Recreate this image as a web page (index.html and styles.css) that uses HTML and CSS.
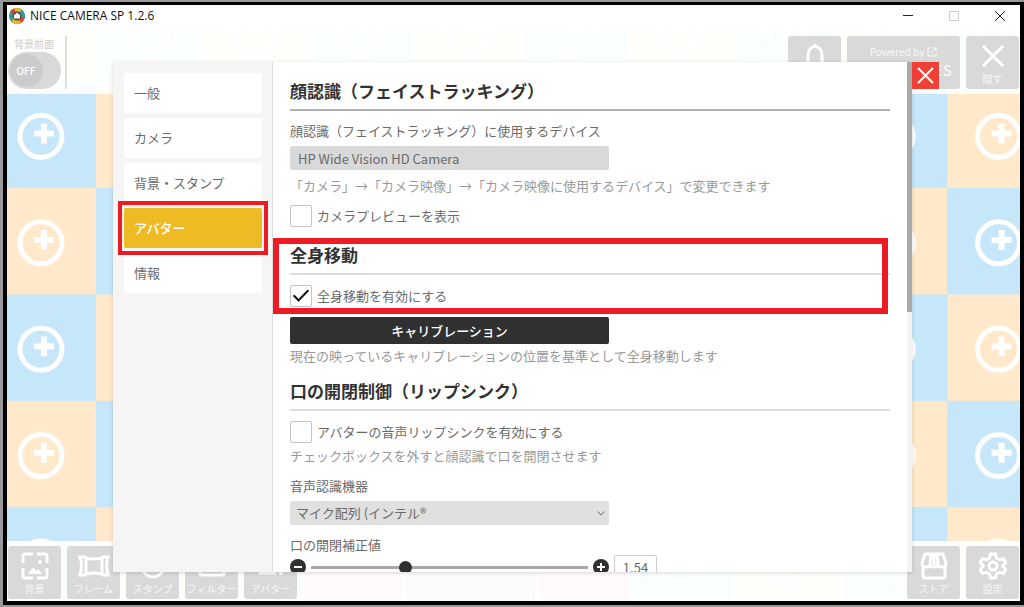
FILE: index.html
```html
<!DOCTYPE html>
<html lang="ja">
<head>
    <meta charset="UTF-8">
    <meta name="viewport" content="width=device-width, initial-scale=1.0">
    <title>NICE CAMERA SP 1.2.6</title>
    <link rel="stylesheet" href="styles.css">
</head>
<body>
    <div class="window">
        <header class="titlebar">
            <svg class="app-icon" viewBox="0 0 16 16">
                <circle cx="8" cy="8" r="8" fill="#2b9c93"/>
                <path d="M8 8L1 4A8 8 0 0 1 6 .3L12 4z" fill="#d8432f"/>
                <path d="M8 8L5 .6A8 8 0 0 1 13.500 2.200L12 8z" fill="#e8b32c"/>
                <path d="M8 8L12 2A8 8 0 0 1 15.500 11L11 11z" fill="#2aa198"/>
                <path d="M8 8L15.500 9A8 8 0 0 1 10 15.700L5 13z" fill="#d8432f"/>
                <path d="M8 8L12 15A8 8 0 0 1 3 14.200L4 9z" fill="#e8b32c"/>
                <circle cx="8" cy="8" r="4.500" fill="#5d4a44"/>
                <path d="M5 6.500h1.500L7.200 5h1.800l.7 1.500H11v4H5z" fill="#fff"/>
            </svg>
            <h1 class="titlebar-text">NICE CAMERA SP 1.2.6</h1>
            <div class="titlebar-controls">
                <button class="win-btn" aria-label="最小化">
                    <svg viewBox="0 0 10 10"><path d="M0 4.500h10" stroke="#222"/></svg>
                </button>
                <button class="win-btn" aria-label="最大化">
                    <svg viewBox="0 0 10 10"><path d="M.5.5h9v9h-9z" stroke="#ccc"/></svg>
                </button>
                <button class="win-btn" aria-label="閉じる">
                    <svg viewBox="0 0 10 10"><path d="M0 0l10 10M10 0L0 10" stroke="#222"/></svg>
                </button>
            </div>
        </header>

        <main class="stage">
            <svg class="board" width="100%" height="100%">
                <defs>
                    <g id="add">
                        <circle cx="51.400" cy="54.800" r="21" fill="none" stroke="#fff" stroke-width="5"/>
                        <path d="M54.400 42v20M44.400 52h20" stroke="#fff" stroke-width="6"/>
                    </g>
                    <pattern id="checker" x="89" y="158" width="212.800" height="212.800" patternUnits="userSpaceOnUse">
                        <rect width="212.800" height="212.800" fill="#ffe9ca"/>
                        <rect width="106.400" height="106.400" fill="#c6e6fa"/>
                        <rect x="106.400" y="106.400" width="106.400" height="106.400" fill="#c6e6fa"/>
                        <use href="#add"/>
                        <use href="#add" x="106.400"/>
                        <use href="#add" y="106.400"/>
                        <use href="#add" x="106.400" y="106.400"/>
                    </pattern>
                </defs>
                <rect width="100%" height="100%" fill="url(#checker)"/>
                <!-- photo frame behind the dialog -->
                <rect x="297" y="500" width="326" height="80" fill="#f7c3ca"/>
                <rect x="400" y="500" width="130" height="80" fill="#ccc"/>
                <path d="M395 500l3 80M530 500v80" stroke="#fff" stroke-width="4"/>
            </svg>

            <div class="toolbar toolbar-top">
                <div class="front-switch">
                    <span id="front-label" class="front-label">背景前面</span>
                    <button class="toggle" role="switch" aria-checked="false" aria-labelledby="front-label">
                        <span class="toggle-knob">OFF</span>
                    </button>
                </div>
                <div class="toolbar-group">
                    <button class="tool" aria-label="お知らせ">
                        <svg class="tool-icon" viewBox="0 0 28 28"><path d="M4 24h20M7 23v-10a7 8.500 0 0 1 14 0v10M14 5v-3"/></svg>
                    </button>
                    <button class="tool tool-powered">
                        <span class="powered-by">Powered by
                            <svg class="link-icon" viewBox="0 0 10 10"><path d="M4 1H1v8h8V6M6 1h3v3M9 1L4 6"/></svg>
                        </span>
                        <span class="powered-name">TEXTURES</span>
                    </button>
                    <button class="tool">
                        <svg class="tool-icon" viewBox="0 0 28 28"><path d="M4 4l20 20M24 4L4 24"/></svg>
                        隠す
                    </button>
                </div>
            </div>

            <div class="toolbar toolbar-bottom">
                <div class="toolbar-group">
                    <button class="tool">
                        <svg class="tool-icon" viewBox="0 0 28 28">
                            <path d="M2 11V4q0-2 2-2h8M16 2h8q2 0 2 2v7M26 16v8q0 2-2 2h-8M12 26H4q-2 0-2-2v-8"/>
                            <path class="solid" d="M7 22l5-7 3 4 2-2 4 5z"/>
                            <circle class="solid" cx="19" cy="10" r="2"/>
                        </svg>
                        背景
                    </button>
                    <button class="tool">
                        <svg class="tool-icon tool-icon-wide" viewBox="0 0 34 28">
                            <path d="M9 6q8 2 16 0v16q-8-2-16 0zM9 5H3q3 8 0 18h6M25 5h6q-3 8 0 18h-6"/>
                        </svg>
                        フレーム
                    </button>
                    <button class="tool">
                        <svg class="tool-icon" viewBox="0 0 28 28"><circle cx="14" cy="14" r="11"/><path d="M9 16q5 5 10 0"/></svg>
                        スタンプ
                    </button>
                    <button class="tool">
                        <svg class="tool-icon" viewBox="0 0 28 28"><rect x="2" y="4" width="24" height="19" rx="2"/></svg>
                        フィルター
                    </button>
                    <button class="tool">
                        <svg class="tool-icon" viewBox="0 0 28 28"><circle cx="14" cy="9" r="6"/><path d="M2 21h17M24 12v11"/></svg>
                        アバター
                    </button>
                </div>
                <div class="toolbar-group">
                    <button class="tool">
                        <svg class="tool-icon" viewBox="0 0 28 28">
                            <path d="M5 2h18l3 9q0 4-4 4t-4-3q0 3-4 3t-4-3q0 3-4 3t-4-4zM10 12l1-10M18 12l-1-10M14 2v11M3 15v9q0 2 2 2h18q2 0 2-2v-9"/>
                        </svg>
                        ストア
                    </button>
                    <button class="tool">
                        <svg class="tool-icon" viewBox="0 0 28 28">
                            <path d="M11.500 2h5l1 4 3 1.700 4-1.200 2.300 4-3 3v1l3 3-2.300 4-4-1.200-3 1.700-1 4h-5l-1-4-3-1.700-4 1.200-2.300-4 3-3v-1l-3-3 2.300-4 4 1.200 3-1.700z"/>
                            <circle cx="14" cy="14" r="4"/>
                        </svg>
                        設定
                    </button>
                </div>
            </div>

            <div class="dialog" role="dialog" aria-label="設定">
                <nav class="menu">
                    <button class="menu-item">一般</button>
                    <button class="menu-item">カメラ</button>
                    <button class="menu-item">背景・スタンプ</button>
                    <button class="menu-item active">アバター<span class="mark"></span></button>
                    <button class="menu-item">情報</button>
                </nav>

                <div class="content">
                    <section>
                        <h2 class="heading heading-dark">顔認識（フェイストラッキング）</h2>
                        <label class="label" for="device">顔認識（フェイストラッキング）に使用するデバイス</label>
                        <input class="field" id="device" type="text" value="HP Wide Vision HD Camera" readonly>
                        <p class="note">「カメラ」→「カメラ映像」→「カメラ映像に使用するデバイス」で変更できます</p>
                        <label class="check"><input type="checkbox">カメラプレビューを表示</label>
                    </section>

                    <section class="marked">
                        <h2 class="heading">全身移動</h2>
                        <label class="check"><input type="checkbox" checked>全身移動を有効にする</label>
                        <span class="mark mark-section"></span>
                    </section>

                    <section>
                        <button class="calibrate">キャリブレーション</button>
                        <p class="note note-tight">現在の映っているキャリブレーションの位置を基準として全身移動します</p>
                    </section>

                    <section>
                        <h2 class="heading">口の開閉制御（リップシンク）</h2>
                        <label class="check"><input type="checkbox">アバターの音声リップシンクを有効にする</label>
                        <p class="note note-tight">チェックボックスを外すと顔認識で口を開閉させます</p>
                        <label class="label" for="mic">音声認識機器</label>
                        <div class="select">
                            <select class="field" id="mic">
                                <option>マイク配列 (インテル®</option>
                            </select>
                            <svg class="select-arrow" viewBox="0 0 8 5"><path d="M.5.5L4 4 7.500.5"/></svg>
                        </div>
                        <label class="label" for="mouth">口の開閉補正値</label>
                        <div class="slider">
                            <button class="step" aria-label="減らす"><svg viewBox="0 0 16 16"><path d="M4 8h8"/></svg></button>
                            <input class="range" id="mouth" type="range" min="0" max="4.6" step="0.01" value="1.54">
                            <button class="step" aria-label="増やす"><svg viewBox="0 0 16 16"><path d="M4 8h8M8 4v8"/></svg></button>
                            <input class="amount" type="text" value="1.54" aria-label="口の開閉補正値">
                        </div>
                    </section>
                </div>

                <div class="scrollbar"><div class="scrollbar-thumb"></div></div>
                <button class="close" aria-label="閉じる">
                    <svg viewBox="0 0 16 16"><path d="M1 1l14 14M15 1L1 15"/></svg>
                </button>
            </div>
        </main>
    </div>
</body>
</html>
```
FILE: styles.css
```css
* {
    box-sizing: border-box;
}

body {
    margin: 0;
    height: 100vh;
    padding: 2px 0 2px 3px;
    display: flex;
    background: #999;
    color: #6a6a6a;
    font: 13px/16px "Noto Sans CJK JP", sans-serif;
}

h1, h2, p {
    margin: 0;
}

button, input, select {
    margin: 0;
    padding: 0;
    border: 0;
    color: inherit;
    font: inherit;
}

svg {
    display: block;
    fill: none;
}

.window {
    flex: 1;
    display: flex;
    flex-direction: column;
    border: 4px solid #000;
    border-top-width: 3px;
    background: #fff;
}

/* title bar */
.titlebar {
    display: flex;
    align-items: center;
    height: 25px;
    padding: 0 15px 4px 2px;
}

.app-icon {
    width: 16px;
    height: 16px;
}

.titlebar-text {
    flex: 1;
    margin-left: 5px;
    color: #111;
    font: 12px/16px "Open Sans", sans-serif;
}

.titlebar-controls {
    display: flex;
    gap: 36px;
}

.win-btn {
    width: 10px;
    background: none;
}

/* stage */
.stage {
    position: relative;
    flex: 1;
    min-height: 0;
    display: flex;
    flex-direction: column;
    justify-content: space-between;
    overflow: hidden;
}

.board {
    position: absolute;
    inset: 0;
}

.toolbar {
    position: relative;
    display: flex;
    justify-content: space-between;
    background: rgba(255, 255, 255, 0.93);
}

.toolbar-top {
    padding: 6px 1px 5px;
}

.toolbar-bottom {
    padding: 5px 1px 2px;
}

.toolbar-group {
    display: flex;
    gap: 6px;
}

.front-switch {
    display: flex;
    flex-direction: column;
    align-items: center;
    width: 59px;
    padding-right: 5px;
    border-right: 2px solid #ddd;
}

.front-label {
    color: #ccc;
    font-size: 10px;
}

.toggle {
    width: 53px;
    height: 37px;
    padding: 2px;
    border-radius: 19px;
    background: #d9d9d9;
}

.toggle-knob {
    display: block;
    width: 33px;
    border-radius: 50%;
    background: #cbcbcb;
    color: #fff;
    font-size: 10px;
    font-weight: 500;
    line-height: 33px;
    text-align: center;
}

.tool {
    display: flex;
    flex-direction: column;
    align-items: center;
    justify-content: space-between;
    width: 53px;
    height: 53px;
    padding: 6px 0 2px;
    border-radius: 3px;
    background: #d9d9d9;
    color: #f8f8f8;
    font-size: 10px;
    white-space: nowrap;
}

.tool-icon {
    width: 28px;
    height: 28px;
    stroke: #fff;
    stroke-width: 3;
}

.tool-icon-wide {
    width: 34px;
}

.tool-icon .solid {
    fill: #fff;
    stroke: none;
}

.tool-powered {
    width: 113px;
    padding: 8px 8px 11px;
}

.powered-by {
    display: flex;
    align-items: center;
    gap: 3px;
}

.link-icon {
    width: 10px;
    height: 10px;
    stroke: #fff;
}

.powered-name {
    align-self: flex-end;
    font-size: 15px;
    font-weight: 500;
}

/* dialog */
.dialog {
    position: absolute;
    inset: 32px 108px 29px 106px;
    display: flex;
    background: #fff;
    box-shadow: 0 1px 4px rgba(0, 0, 0, 0.15);
}

.menu {
    display: flex;
    flex-direction: column;
    gap: 5px;
    width: 160px;
    padding: 11px 10px 11px 11px;
    border-right: 1px solid #ddd;
    background: #f5f5f5;
}

.menu-item {
    position: relative;
    height: 40px;
    padding-left: 10px;
    border-radius: 2px;
    background: #fff;
    text-align: left;
}

.menu-item.active {
    z-index: 1;
    background: #efbb24;
    color: #fff;
    font-weight: 500;
}

.mark {
    position: absolute;
    inset: -7px -6px;
    border: 4px solid #ed1c24;
}

.mark-section {
    inset: -5px 2px -6px -17px;
    border-width: 6px;
    pointer-events: none;
}

.content {
    flex: 1;
    min-width: 0;
    padding: 2px 17px 0;
    overflow: hidden;
}

.marked {
    position: relative;
}

.heading {
    padding: 0 0 6px;
    margin: 15px 0 9px;
    border-bottom: 2px solid #ddd;
    color: #333;
    font-size: 17px;
    font-weight: 700;
    line-height: 24px;
}

.heading-dark {
    border-color: #b0b0b0;
}

.label {
    display: block;
    margin: 12px 0 7px;
}

.field {
    display: block;
    width: 319px;
    height: 24px;
    padding: 0 8px;
    border-radius: 2px;
    background: #d9d9d9;
}

.note {
    margin: 8px 0 10px;
    color: #999;
}

.note-tight {
    margin: 4px 0 14px;
}

.check {
    display: flex;
    align-items: center;
    gap: 5px;
    height: 24px;
}

.check input {
    appearance: none;
    display: grid;
    place-items: center;
    width: 22px;
    height: 22px;
    border: 1px solid #c4c4c4;
    border-radius: 2px;
}

.check input:checked::after {
    content: "";
    width: 6px;
    height: 13px;
    margin-bottom: 5px;
    border: solid #111;
    border-width: 0 2px 2px 0;
    transform: rotate(45deg);
}

.calibrate {
    display: block;
    width: 319px;
    height: 27px;
    margin-top: 9px;
    border-radius: 2px;
    background: #303030;
    color: #fff;
    font-weight: 500;
}

.select {
    position: relative;
    width: 319px;
}

.select .field {
    appearance: none;
    padding: 0 6px;
    background: #e0e0e0;
}

.select-arrow {
    position: absolute;
    top: 10px;
    right: 4px;
    width: 8px;
    stroke: #666;
}

.slider {
    display: flex;
    align-items: center;
    height: 24px;
    margin-top: -5px;
}

.step {
    width: 16px;
    height: 16px;
    border-radius: 50%;
    background: #303030;
}

.step svg {
    stroke: #fff;
    stroke-width: 2;
}

.range {
    appearance: none;
    width: 277px;
    height: 3px;
    margin: 0 5px;
    background: #a8a8a8;
}

.range::-webkit-slider-thumb {
    appearance: none;
    width: 13px;
    height: 13px;
    border-radius: 50%;
    background: #303030;
}

.amount {
    width: 43px;
    height: 24px;
    margin-left: 5px;
    border: 1px solid #ccc;
    border-radius: 2px;
    text-align: center;
}

.scrollbar {
    width: 5px;
    background: #f3f3f3;
}

.scrollbar-thumb {
    height: 49%;
    background: #a9a9a9;
}

.close {
    position: absolute;
    top: 0;
    left: 100%;
    width: 27px;
    height: 27px;
    padding: 5px;
    background: #ee4035;
}

.close svg {
    stroke: #fff;
    stroke-width: 2;
}
```
